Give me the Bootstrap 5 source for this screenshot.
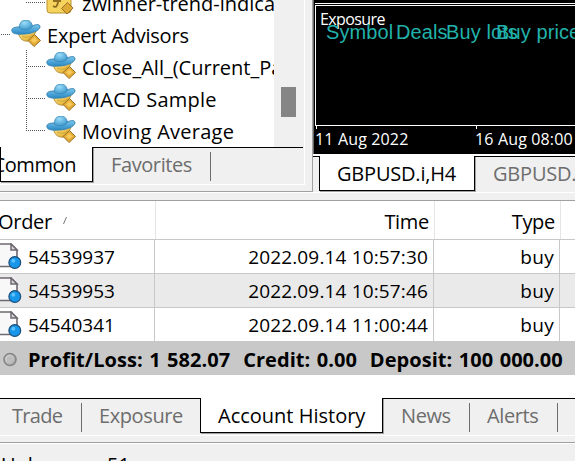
<!DOCTYPE html>
<html lang="en">
<head>
  <meta charset="UTF-8">
  <title>Account History</title>
  <meta name="viewport" content="width=device-width, initial-scale=1">
  <link href="https://cdn.jsdelivr.net/npm/bootstrap@5.3.3/dist/css/bootstrap.min.css" rel="stylesheet">
  <style>
    body { width: 575px; height: 461px; background: #f0f0f0; color: #000; font: 20px/32px "Open Sans", "Noto Sans", sans-serif; white-space: nowrap; }
    svg { display: block; flex: none; }
    .upper { height: 193px; margin-bottom: 7px; border-bottom: 1px solid #fff; }

    /* navigator */
    .navigator { width: 313px; height: 192px; border-right: 1px solid #a0a0a0; border-bottom: 1px solid #a0a0a0; }
    .nav-inner { width: 305px; height: 185px; border-right: 1px solid #fff; border-bottom: 1px solid #fff; }
    .tree { width: 274px; height: 147px; }
    .tree-list { margin-top: -12px; }
    .tree-row { height: 32px; }
    .tree-tight { letter-spacing: -.2px; }
    .tree-wide { letter-spacing: .25px; }
    .scroll-track { width: 30px; height: 147px; padding: 87px 8px 0 7px; }
    .scroll-thumb { height: 30px; background: #858585; }

    /* tab strips */
    .strip { color: #6d6d6d; letter-spacing: -.4px; }
    .strip-on { background: #fff; color: #000; border: 1px solid #000; border-top: 0; box-shadow: 1px 1px 0 #a0a0a0; height: 35px; letter-spacing: 0; }
    .strip-off { border-top: 1px solid #000; }
    .strip-bar { width: 1px; height: 29px; background: #6d6d6d; margin-top: 4px; }
    .tab-common { width: 93px; padding: 2px 16px 0 0; letter-spacing: -.4px; }
    .tab-rest { padding-left: 18px; margin-right: 1px; }
    .tab-fav { width: 99px; padding-top: 1px; }
    .tab-lead { width: 6px; }
    .tab-chart { width: 156px; padding: 2px 0 0 17px; letter-spacing: -.2px; }
    .tab-chart2 { padding: 1px 0 0 18px; letter-spacing: -.2px; }
    .tabs-left { width: 200px; padding-left: 12px; }
    .tab-trade { width: 69px; padding-top: 1px; letter-spacing: -.7px; }
    .tab-expo { padding: 1px 0 0 17px; }
    .tab-account { width: 183px; padding: 2px 0 0 17px; }
    .tab-news { width: 68px; padding-top: 1px; }
    .tab-alerts { width: 87px; padding: 1px 0 0 17px; }
    .terminal-tabs { height: 37px; }

    /* chart */
    .chart-side { width: 262px; height: 192px; }
    .chart { height: 154px; background: #000; color: #fff; border-left: 1px solid #696969; font-size: 16px; line-height: 20px; }
    .chart-top { height: 4px; margin-left: 1px; border-bottom: 1px solid #fff; }
    .chart-pane { height: 121px; margin: 1px 0 0 1px; border: 1px solid #fff; border-right: 0; }
    .chart-gap { height: 2px; }
    .pane-title { margin-left: 4px; height: 14px; padding-top: 3px; letter-spacing: -.6px; }
    .pane-heads { font: 20px/24px "Liberation Sans", sans-serif; color: #20b2aa; padding-left: 10px; letter-spacing: .1px; }
    .head-symbol { width: 70px; }
    .head-deals { width: 50px; }
    .head-lots { width: 50px; }
    .axis { margin-left: 1px; }
    .axis-mark { width: 160px; flex: none; letter-spacing: .15px; }
    .axis-tick { width: 1px; height: 3px; margin-left: 1px; background: #fff; }

    /* history grid */
    .history { height: 198px; background: #fff; border-top: 1px solid #a0a0a0; }
    .grid-head { height: 39px; line-height: 41px; border-bottom: 1px solid #c8c8c8; letter-spacing: -.3px; }
    .grid-line { height: 34px; line-height: 35px; border-bottom: 1px solid #c8c8c8; font-size: 19px; }
    .grid-line.alt { background: #eaeaea; }
    .c1 { width: 155px; border-right: 1px solid #c8c8c8; }
    .c2 { width: 279px; padding-right: 5px; border-right: 1px solid #c8c8c8; }
    .c3 { width: 126px; padding-right: 5px; border-right: 1px solid #c8c8c8; }
    .grid-line .c2 { letter-spacing: .15px; }
    .grid-line .c3 { letter-spacing: .3px; }
    .grid-head > div { border-color: #e5e5e5; }
    .grid-head .c1 { width: 156px; }
    .head-order { margin-left: -2px; width: 65px; }
    .sort-mark { margin-top: 16px; }
    .order-no { margin-left: 6px; }
    .summary { height: 33px; line-height: 35px; background: #c8c8c8; font-weight: 700; letter-spacing: .05px; word-spacing: 1.2px; white-space: pre; }

    .bottom-edge { height: 8px; border-top: 1px solid #fff; border-bottom: 1px solid #a0a0a0; }
    .status { height: 18px; border-top: 1px solid #fff; line-height: 42px; padding-left: 1px; }
    .status-label { width: 106px; }
  </style>
</head>
<body class="overflow-hidden">
  <svg width="0" height="0" class="position-absolute">
    <defs>
      <linearGradient id="gold" x1="0" y1="0" x2="1" y2="1"><stop offset="0" stop-color="#ffe88a"/><stop offset="1" stop-color="#e0a520"/></linearGradient>
      <linearGradient id="brim" x1="0" y1="0" x2="0" y2="1"><stop offset="0" stop-color="#7cc8ee"/><stop offset="1" stop-color="#2787c4"/></linearGradient>
      <radialGradient id="dome" cx=".4" cy=".3" r=".8"><stop offset="0" stop-color="#9bdcf8"/><stop offset="1" stop-color="#308fc8"/></radialGradient>
      <radialGradient id="bead" cx=".4" cy=".4" r=".7"><stop offset="0" stop-color="#e8e8e8"/><stop offset="1" stop-color="#999"/></radialGradient>
      <symbol id="expert" viewBox="0 0 30 28">
        <path d="M7 12C8 21 14 24 21 21L25 12Z" fill="url(#gold)" stroke="#b5953f"/>
        <path d="M11 17Q17 20 22 15.500" fill="none" stroke="#c79c35" stroke-width=".8"/>
        <path d="M1 12C0 9 4 8 8 8Q16 12 21 7C26 5 29 5 29 8C28 12 21 14.500 14 15C7 15.500 1 15 1 12Z" fill="url(#brim)" stroke="#3c86b4"/>
        <path d="M8 8.500C9 3 11 1 15 1C19 1 21 4 21.500 7.500C19 11.500 11 12 8 8.500Z" fill="url(#dome)" stroke="#3c86b4" stroke-width=".8"/>
        <path d="M23.500 15.500L29.500 21.500L23 27.500L17 21.500Z" fill="#e5ad35" stroke="#987126"/>
        <path d="M23.300 18L26.500 21.500L23 24L20 21.500Z" fill="#f5c95c"/>
      </symbol>
      <symbol id="order" viewBox="0 0 22 27">
        <path d="M-4 1H11L17 7V23.500H-4Z" fill="#f8f8f8" stroke="#6e6870" stroke-width="1.600"/>
        <path d="M11 1V7H17Z" fill="#ddd" stroke="#6e6870" stroke-width="1.500"/>
        <circle cx="14.800" cy="19.500" r="5.900" fill="#1796ea" stroke="#1d4d78" stroke-width="1.200"/>
        <circle cx="13.300" cy="17.800" r="2" fill="#5cc0ff"/>
      </symbol>
    </defs>
  </svg>

  <div class="upper d-flex">
    <div class="navigator flex-shrink-0">
      <div class="nav-inner">
        <div class="d-flex">
          <div class="tree bg-white overflow-hidden">
            <div class="tree-list">
              <div class="tree-row d-flex">
                <svg width="82" height="32">
                  <path d="M26 14.500H46" stroke="#555" stroke-dasharray="1 1"/>
                  <rect x="47" y="1" width="24" height="24" rx="3" fill="#f5d35c" stroke="#b89230"/>
                  <path d="M53 18Q57 21 58 14L59 7M53 13H61" fill="none" stroke="#8e6c20" stroke-width="1.800"/>
                  <path d="M67.500 14.500L73 20L67 26L61.500 20.500Z" fill="#deaa35" stroke="#987126"/>
                </svg>
                <span>zwinner-trend-indicator</span>
              </div>
              <div class="tree-row d-flex">
                <svg width="47" height="32">
                  <path d="M1 14.500H10M26.500 30V32" stroke="#555" stroke-dasharray="1 1"/>
                  <use href="#expert" x="11" y="-1" width="30" height="28"/>
                </svg>
                <span class="tree-tight">Expert Advisors</span>
              </div>
              <div class="tree-row d-flex">
                <svg width="82" height="32">
                  <path d="M26.500 0V32M26 14.500H46" stroke="#555" stroke-dasharray="1 1"/>
                  <use href="#expert" x="46" y="-1" width="30" height="28"/>
                </svg>
                <span>Close_All_(Current_Pair)</span>
              </div>
              <div class="tree-row d-flex">
                <svg width="82" height="32">
                  <path d="M26.500 0V32M26 14.500H46" stroke="#555" stroke-dasharray="1 1"/>
                  <use href="#expert" x="46" y="-1" width="30" height="28"/>
                </svg>
                <span class="tree-wide">MACD Sample</span>
              </div>
              <div class="tree-row d-flex">
                <svg width="82" height="32">
                  <path d="M26.500 0V15M26 14.500H46" stroke="#555" stroke-dasharray="1 1"/>
                  <use href="#expert" x="46" y="-1" width="30" height="28"/>
                </svg>
                <span class="tree-wide">Moving Average</span>
              </div>
            </div>
          </div>
          <div class="scroll-track"><div class="scroll-thumb"></div></div>
        </div>
        <div class="strip d-flex">
          <div class="strip-on tab-common d-flex justify-content-end">Common</div>
          <div class="strip-off tab-rest d-flex flex-grow-1">
            <span class="tab-fav">Favorites</span><i class="strip-bar"></i>
          </div>
        </div>
      </div>
    </div>

    <div class="chart-side overflow-hidden">
      <div class="chart">
        <div class="chart-top"></div>
        <div class="chart-pane">
          <div class="pane-title">Exposure</div>
          <div class="pane-heads d-flex">
            <span class="head-symbol flex-shrink-0">Symbol</span>
            <span class="head-deals flex-shrink-0">Deals</span>
            <span class="head-lots flex-shrink-0">Buy lots</span>
            <span class="flex-shrink-0">Buy price</span>
          </div>
        </div>
        <div class="axis d-flex">
          <div class="axis-mark"><div class="axis-tick"></div>11 Aug 2022</div>
          <div class="axis-mark"><div class="axis-tick"></div>16 Aug 08:00</div>
        </div>
      </div>
      <div class="chart-gap bg-white"></div>
      <div class="strip d-flex">
        <div class="strip-off tab-lead flex-shrink-0"></div>
        <div class="strip-on tab-chart flex-shrink-0">GBPUSD.i,H4</div>
        <div class="strip-off tab-chart2 flex-shrink-0">GBPUSD.i,H1</div>
      </div>
    </div>
  </div>

  <div class="history">
    <div class="grid-head d-flex">
      <div class="c1 d-flex">
        <span class="head-order">Order</span>
        <svg class="sort-mark" width="5" height="8"><path d="M.5 7L3.500 0" stroke="#777" fill="none"/></svg>
      </div>
      <div class="c2 text-end">Time</div>
      <div class="c3 text-end">Type</div>
    </div>
    <div class="grid-line d-flex">
      <div class="c1 d-flex"><svg width="22" height="30"><use href="#order" y="3" width="22" height="27"/></svg><span class="order-no">54539937</span></div>
      <div class="c2 text-end">2022.09.14 10:57:30</div>
      <div class="c3 text-end">buy</div>
    </div>
    <div class="grid-line alt d-flex">
      <div class="c1 d-flex"><svg width="22" height="30"><use href="#order" y="3" width="22" height="27"/></svg><span class="order-no">54539953</span></div>
      <div class="c2 text-end">2022.09.14 10:57:46</div>
      <div class="c3 text-end">buy</div>
    </div>
    <div class="grid-line d-flex">
      <div class="c1 d-flex"><svg width="22" height="30"><use href="#order" y="3" width="22" height="27"/></svg><span class="order-no">54540341</span></div>
      <div class="c2 text-end">2022.09.14 11:00:44</div>
      <div class="c3 text-end">buy</div>
    </div>
    <div class="summary d-flex"><svg width="28" height="33"><circle cx="10" cy="17.500" r="6" fill="url(#bead)" stroke="#858585" stroke-width="1.600"/><circle cx="9.500" cy="17" r="3" fill="#bdbdbd"/></svg><span>Profit/Loss: 1 582.07  Credit: 0.00  Deposit: 100 000.00</span></div>
  </div>

  <div class="strip terminal-tabs d-flex">
    <div class="strip-off tabs-left d-flex">
      <span class="tab-trade">Trade</span><i class="strip-bar"></i><span class="tab-expo">Exposure</span>
    </div>
    <div class="strip-on tab-account">Account History</div>
    <div class="strip-off tab-rest d-flex flex-grow-1 me-0">
      <span class="tab-news">News</span><i class="strip-bar"></i><span class="tab-alerts">Alerts</span><i class="strip-bar"></i>
    </div>
  </div>
  <div class="bottom-edge"></div>
  <div class="status d-flex overflow-hidden"><span class="status-label">Unknown</span><span>51</span></div>

  <script src="https://cdn.jsdelivr.net/npm/bootstrap@5.3.3/dist/js/bootstrap.bundle.min.js"></script>
</body>
</html>
